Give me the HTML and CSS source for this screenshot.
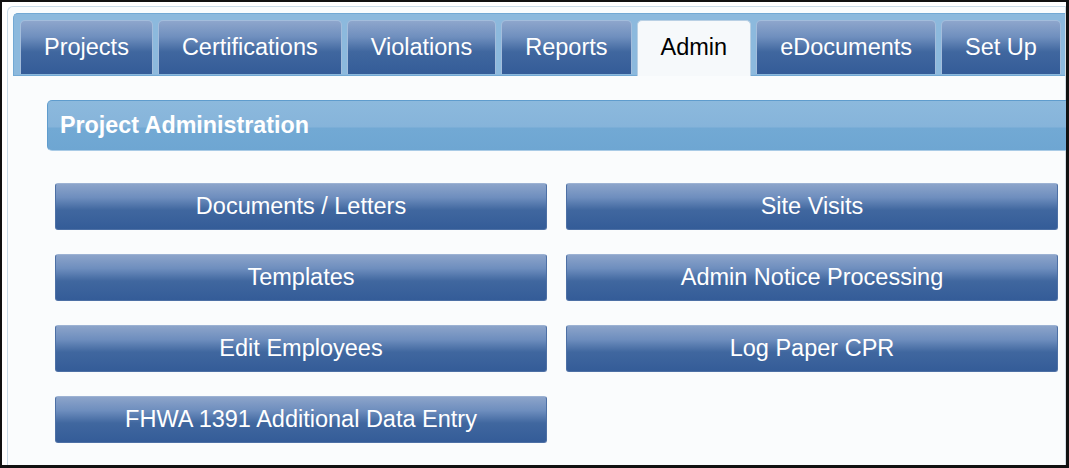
FILE: index.html
```html
<!DOCTYPE html>
<html lang="en">
<head>
  <meta charset="UTF-8" />
  <title>Project Administration</title>
  <link rel="stylesheet" href="styles.css">
</head>
<body>

<div class="frame">
  <div class="panel">
    <div class="tabbar">
      <a class="tab">Projects</a>
      <a class="tab">Certifications</a>
      <a class="tab">Violations</a>
      <a class="tab">Reports</a>
      <a class="tab active">Admin</a>
      <a class="tab">eDocuments</a>
      <a class="tab">Set Up</a>
    </div>

    <div class="section-head">Project Administration</div>

    <div class="button-grid">
      <button class="blue-button">Documents / Letters</button>
      <button class="blue-button">Site Visits</button>
      <button class="blue-button">Templates</button>
      <button class="blue-button">Admin Notice Processing</button>
      <button class="blue-button">Edit Employees</button>
      <button class="blue-button">Log Paper CPR</button>
      <button class="blue-button">FHWA 1391 Additional Data Entry</button>
    </div>
  </div>
</div>

</body>
</html>
```

FILE: styles.css
```css
body {
  margin: 0;
  background: #fff;
  font-family: "Liberation Sans", Arial, sans-serif;
}
.frame {
  width: 1069px;
  height: 468px;
  box-sizing: border-box;
  border: 2px solid #111;
  border-right-width: 3px;
  border-bottom-width: 3px;
  overflow: hidden;
  background: #fff;
}
.panel {
  margin: 4px 0 0 5px;
  height: 480px;
  border: 1px solid #c9dbe8;
  border-right-color: #d3dde4;
  border-radius: 6px 0 0 0;
  padding: 6px 0 0 5px;
  background: #fafcfd;
}
.tabbar {
  display: flex;
  align-items: flex-end;
  gap: 5px;
  height: 63px;
  box-sizing: border-box;
  padding: 6px 0 0 6px;
  background: #8cb9dd;
  border: 1px solid #72a9d4;
  border-right: none;
  border-radius: 5px 0 0 0;
}
.tab {
  height: 54px;
  box-sizing: border-box;
  padding: 0 23px;
  line-height: 52px;
  font-size: 23.5px;
  color: #fff;
  white-space: nowrap;
  border: 1px solid #a3bddc;
  border-bottom: none;
  border-radius: 5px 5px 0 0;
  background: linear-gradient(#8ea6cc 0%, #6f8fbe 30%, #40679f 58%, #345c98 100%);
  margin-bottom: 1px;
}
.tab.active {
  height: 56px;
  margin-bottom: -1px;
  line-height: 53px;
  color: #000;
  background: #f6f9fb;
  border-color: #b9d0e4;
}
.section-head {
  margin: 24px -20px 0 34px;
  height: 51px;
  box-sizing: border-box;
  padding-left: 12px;
  line-height: 48px;
  font-size: 23.3px;
  font-weight: bold;
  color: #fff;
  border: 1px solid #5f9ccd;
  border-bottom-color: #a9cbe6;
  border-radius: 5px 0 0 5px;
  background: linear-gradient(#8cb9dd 0%, #86b4da 52%, #72a9d4 56%, #6ea6d2 100%);
}
.button-grid {
  display: grid;
  grid-template-columns: 492px 492px;
  column-gap: 19px;
  row-gap: 24px;
  margin: 32px 0 0 42px;
}
.blue-button {
  height: 47px;
  padding: 0;
  font-family: "Liberation Sans", Arial, sans-serif;
  font-size: 23.5px;
  color: #fff;
  border: 1px solid #4d70a5;
  border-top-color: #9cb2d3;
  border-radius: 3px;
  background: linear-gradient(#8ca4ca 0%, #6e8ebe 30%, #40679f 58%, #345c98 100%);
  cursor: pointer;
}
```
